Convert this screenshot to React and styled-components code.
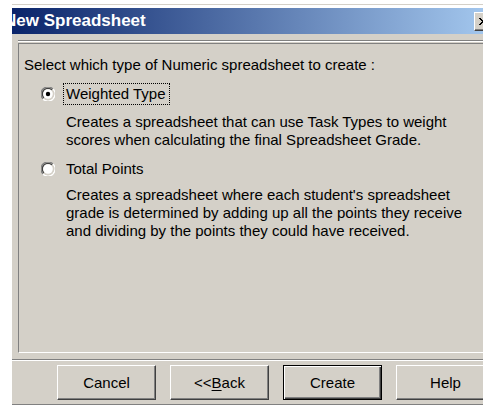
import React from "react";
import styled, { createGlobalStyle } from "styled-components";

const GlobalStyle = createGlobalStyle`
  html, body {
    margin: 0;
    padding: 0;
    background: #ffffff;
    overflow: hidden;
  }
  body {
    font-family: "Liberation Sans", Arial, sans-serif;
  }
`;

const Dialog = styled.div`
  box-sizing: border-box;
  margin: 4px 0 0 12px;
  width: 484px;
  height: 401px;
  padding-top: 3px;
  background: #d4d0c8;
  border-top: 1px solid #d4d0c8;
  border-bottom: 1px solid #808080;
  box-shadow: inset 0 3px #ffffff;
  display: flex;
  flex-direction: column;
  overflow: hidden;
`;

const TitleBar = styled.div`
  height: 26px;
  flex: none;
  display: flex;
  align-items: center;
  justify-content: space-between;
  padding-right: 4px;
  background: linear-gradient(to right, #0a246a, #a6caf0);
  overflow: hidden;
`;

const Title = styled.span`
  margin-left: -8px;
  color: #ffffff;
  font-weight: bold;
  font-size: 17px;
  white-space: nowrap;
`;

const CloseButton = styled.div`
  box-sizing: border-box;
  width: 18px;
  height: 19px;
  display: flex;
  align-items: center;
  justify-content: center;
  background: #d4d0c8;
  border: 1px solid;
  border-color: #ffffff #404040 #404040 #ffffff;
  box-shadow: inset -1px -1px #808080;
`;

const Etched = styled.div`
  flex: none;
  height: 0;
  border-top: 1px solid #808080;
  border-bottom: 1px solid #ffffff;
  margin-top: ${(p) => p.$top}px;
`;

const Body = styled.div`
  padding-left: 6px;
`;

const Panel = styled.div`
  box-sizing: border-box;
  height: 310px;
  margin-top: 1px;
  margin-right: 6px;
  padding: 12px 0 0 5px;
  border: 1px solid;
  border-color: #808080 #ffffff #ffffff #808080;
  font-size: 15px;
  line-height: 18px;
  color: #000000;
`;

const Prompt = styled.div`
  white-space: nowrap;
  margin-bottom: 9px;
`;

const Option = styled.div`
  margin-bottom: 9px;
`;

const OptionRow = styled.div`
  display: flex;
  align-items: center;
  margin-left: 17px;
`;

const RadioMark = styled.svg`
  flex: none;
  width: 14px;
  height: 14px;
  margin-right: 8px;
`;

const OptionLabel = styled.span`
  padding: 1px 3px 1px 2px;
  border: 1px dotted ${(p) => (p.$focused ? "#000000" : "transparent")};
  white-space: nowrap;
`;

const Description = styled.div`
  margin: ${(p) => p.$gap}px 0 0 42px;
  white-space: nowrap;
`;

const ButtonRow = styled.div`
  flex: none;
  display: flex;
  gap: 14px;
  margin-top: 4px;
  padding-left: 45px;
`;

const Button = styled.div`
  box-sizing: border-box;
  flex: none;
  width: 99px;
  height: 35px;
  display: flex;
  align-items: center;
  justify-content: center;
  font-size: 15px;
  color: #000000;
  background: #d4d0c8;
  border: 1px solid;
  border-color: ${(p) =>
    p.$default ? "#000000" : "#ffffff #404040 #404040 #ffffff"};
  box-shadow: ${(p) =>
    p.$default
      ? "inset 1px 1px #ffffff, inset -1px -1px #404040, inset -2px -2px #808080"
      : "inset -1px -1px #808080, inset 1px 1px #d4d0c8"};

  u {
    text-decoration: underline;
    text-underline-offset: 2px;
  }
`;

// classic sunken radio: dark rim top-left, light rim bottom-right
function Radio({ checked }) {
  return (
    <RadioMark viewBox="0 0 14 14">
      <path d="M12 2A7 7 0 0 0 2 12" fill="none" stroke="#808080" strokeWidth="1.3" />
      <path d="M11 3A5.6 5.6 0 0 0 3 11" fill="none" stroke="#404040" strokeWidth="1.2" />
      <path d="M2 12A7 7 0 0 0 12 2" fill="none" stroke="#ffffff" strokeWidth="1.3" />
      <path d="M3 11A5.6 5.6 0 0 0 11 3" fill="none" stroke="#d4d0c8" strokeWidth="1.2" />
      <circle cx="7" cy="7" r="4.8" fill="#ffffff" />
      {checked && <circle cx="7" cy="7" r="2.2" fill="#000000" />}
    </RadioMark>
  );
}

const options = [
  {
    label: "Weighted Type",
    checked: true,
    gap: 8,
    lines: [
      "Creates a spreadsheet that can use Task Types to weight",
      "scores when calculating the final Spreadsheet Grade.",
    ],
  },
  {
    label: "Total Points",
    checked: false,
    gap: 6,
    lines: [
      "Creates a spreadsheet where each student's spreadsheet",
      "grade is determined by adding up all the points they receive",
      "and dividing by the points they could have received.",
    ],
  },
];

export default function App() {
  return (
    <>
      <GlobalStyle />
      <Dialog>
        <TitleBar>
          <Title>New Spreadsheet</Title>
          <CloseButton>
            <svg width="8" height="7" viewBox="0 0 8 7">
              <path d="M0 0L7 7M1 0L8 7M7 0L0 7M8 0L1 7" stroke="#000" strokeWidth="1" />
            </svg>
          </CloseButton>
        </TitleBar>
        <Body>
          <Etched $top={6} />
          <Panel>
            <Prompt>Select which type of Numeric spreadsheet to create :</Prompt>
            {options.map((opt) => (
              <Option key={opt.label}>
                <OptionRow>
                  <Radio checked={opt.checked} />
                  <OptionLabel $focused={opt.checked}>{opt.label}</OptionLabel>
                </OptionRow>
                <Description $gap={opt.gap}>
                  {opt.lines.map((line) => (
                    <div key={line}>{line}</div>
                  ))}
                </Description>
              </Option>
            ))}
          </Panel>
        </Body>
        <Etched $top={6} />
        <ButtonRow>
          <Button>Cancel</Button>
          <Button>
            &lt;&lt;<u>B</u>ack
          </Button>
          <Button $default>Create</Button>
          <Button>Help</Button>
        </ButtonRow>
      </Dialog>
    </>
  );
}
